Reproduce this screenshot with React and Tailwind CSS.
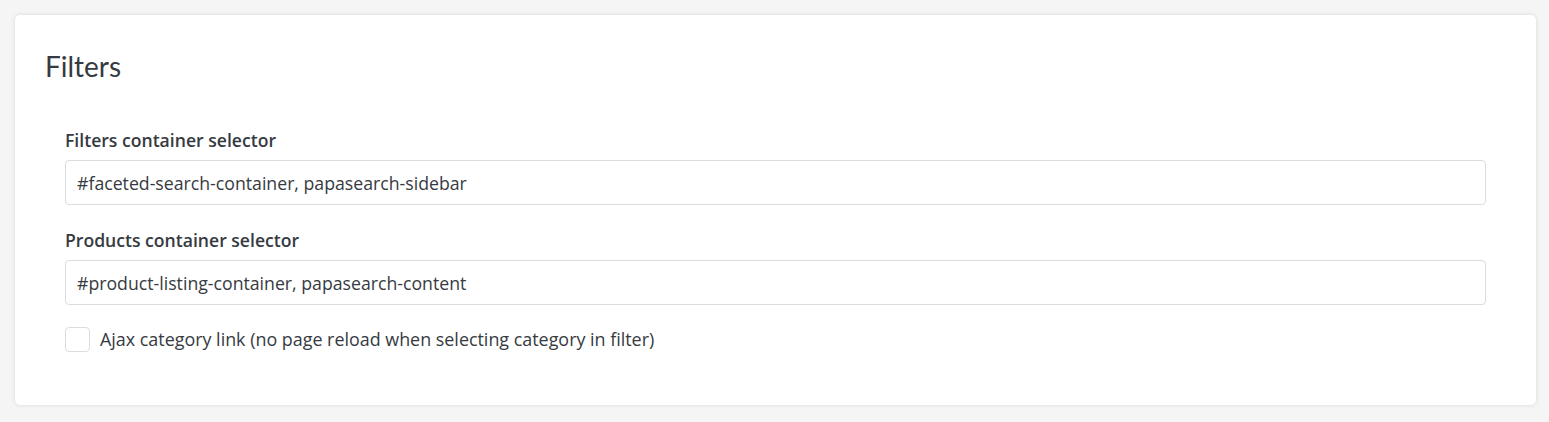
import React from "react";

const Field = ({ label, value, className }) => (
  <div className={className}>
    <label className="block text-[17.6px] font-semibold leading-[24px] mb-[8px] text-[#363a41]">
      {label}
    </label>
    <input
      type="text"
      defaultValue={value}
      className="block w-full h-[45px] px-[11px] text-[17.7px] text-[#363a41] bg-white border border-[#dcdce0] rounded-[4px] outline-none"
    />
  </div>
);

export default function App() {
  return (
    <div
      className="min-h-[422px] bg-[#f5f5f5] p-[15px] pr-[13px]"
      style={{ fontFamily: "'Open Sans', 'Liberation Sans', sans-serif" }}
    >
      <div className="bg-white rounded-[5px] shadow-[0_0_4px_rgba(0,0,0,0.12)] pt-[33px] pb-[53px] pl-[30px] pr-[50px]">
        <h2 className="text-[28px] leading-[36px] font-normal text-[#363a41] mb-[44px] font-[Lato]">
          Filters
        </h2>
        <div className="pl-[20px]">
          <Field
            className="mb-[23px]"
            label="Filters container selector"
            value="#faceted-search-container, papasearch-sidebar"
          />
          <Field
            className="mb-[22px]"
            label="Products container selector"
            value="#product-listing-container, papasearch-content"
          />
          <label className="flex items-center gap-[10px] text-[17.9px] leading-[25px] text-[#363a41]">
            <span className="w-[25px] h-[25px] border border-[#dcdce0] rounded-[4px] bg-white" />
            Ajax category link (no page reload when selecting category in filter)
          </label>
        </div>
      </div>
    </div>
  );
}
